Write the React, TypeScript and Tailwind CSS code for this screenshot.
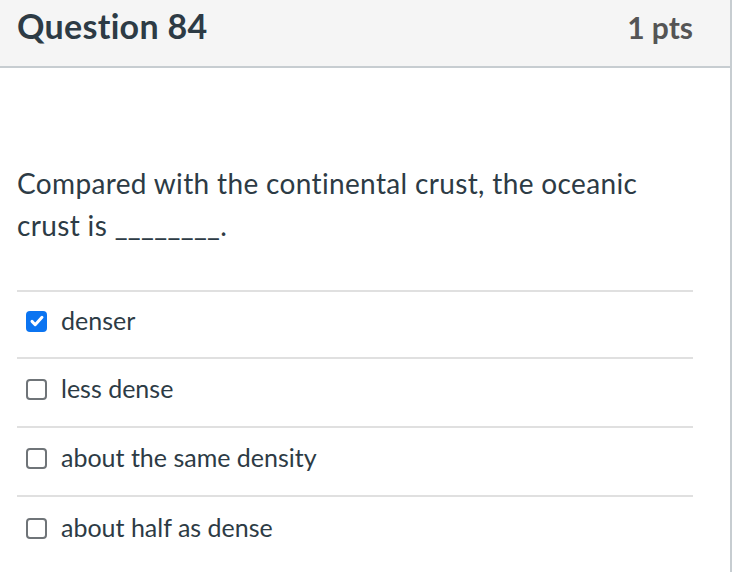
import React from 'react';

const options = [
  { label: 'denser', checked: true, h: 'h-[67px]' },
  { label: 'less dense', checked: false, h: 'h-[69px]' },
  { label: 'about the same density', checked: false, h: 'h-[69px]' },
  { label: 'about half as dense', checked: false, h: 'h-[69px]' },
];

const CheckBox: React.FC<{ checked: boolean }> = ({ checked }) =>
  checked ? (
    <span className="flex h-[21px] w-[21px] shrink-0 items-center justify-center rounded-[4px] bg-[#0b74f1]">
      <svg viewBox="0 0 16 16" className="h-[16px] w-[16px]" fill="none" stroke="white" strokeWidth={3} strokeLinecap="round" strokeLinejoin="round">
        <path d="M3 8.4l3.2 3.3 6.8-7.4" />
      </svg>
    </span>
  ) : (
    <span className="block h-[21px] w-[21px] shrink-0 rounded-[4px] border-2 border-[#6f7478] bg-white" />
  );

export default function App() {
  return (
    <div className="h-[572px] w-[734px] overflow-hidden bg-white font-['Lato','Open_Sans',sans-serif] text-[#2d3b45]">
      <div className="h-full w-[732px] border-r-2 border-[#c7cdd1]">
        <div className="flex h-[68px] items-baseline justify-between border-b-2 border-[#c7cdd1] bg-[#f5f5f5] pl-[17px] pr-[37px] pt-[6px]">
          <h2 className="text-[34px] font-bold leading-[40px] tracking-[0.3px]">Question 84</h2>
          <span className="text-[30px] font-bold leading-[40px] text-[#555555]">1 pts</span>
        </div>
        <div className="pl-[17px] pr-[37px]">
          <p className="mt-[94px] text-[28px] leading-[42px] tracking-[0.35px]">
            Compared with the continental crust, the oceanic crust is ________.
          </p>
          <div className="mt-[44px] border-t-2 border-[#e0e0e0]">
            {options.map((o, i) => (
              <div
                key={o.label}
                className={`flex ${o.h} items-center gap-[14px] pb-[7px] pl-[9px] ${i < options.length - 1 ? 'border-b-2 border-[#e0e0e0]' : ''}`}
              >
                <CheckBox checked={o.checked} />
                <span className="text-[25px]">{o.label}</span>
              </div>
            ))}
          </div>
        </div>
      </div>
    </div>
  );
}
